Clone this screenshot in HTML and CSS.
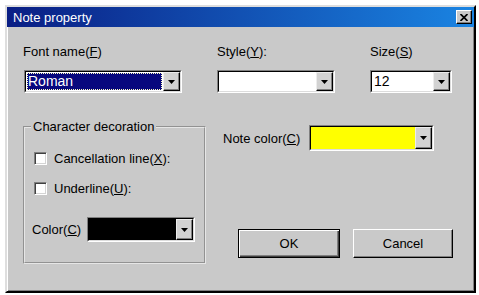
FILE: index.html
```html
<!DOCTYPE html>
<html lang="en">

<head>
  <meta charset="UTF-8">
  <title>Note property</title>
  <link rel="stylesheet" href="styles.css">
</head>

<body>
  <div class="window">
    <div class="titlebar">
      <span class="title">Note property</span>
      <span class="close-button">
        <svg width="8" height="7" viewBox="0 0 8 7"><path d="M0.5 0 L7.5 7 M7.5 0 L0.5 7" stroke="#000" stroke-width="1.7" fill="none"/></svg>
      </span>
    </div>

    <div class="content">
      <div class="top-row">
        <div class="field">
          <label class="label">Font name(<u>F</u>)</label>
          <div class="combo font-combo">
            <div class="combo-field">
              <span class="value selected">Roman</span>
              <span class="drop"><svg width="7" height="4" viewBox="0 0 7 4"><path d="M0 0H7L3.5 4Z" fill="#000"/></svg></span>
            </div>
          </div>
        </div>
        <div class="field">
          <label class="label">Style(<u>Y</u>):</label>
          <div class="combo style-combo">
            <div class="combo-field">
              <span class="value"></span>
              <span class="drop"><svg width="7" height="4" viewBox="0 0 7 4"><path d="M0 0H7L3.5 4Z" fill="#000"/></svg></span>
            </div>
          </div>
        </div>
        <div class="field">
          <label class="label">Size(<u>S</u>)</label>
          <div class="combo size-combo">
            <div class="combo-field">
              <span class="value">12</span>
              <span class="drop"><svg width="7" height="4" viewBox="0 0 7 4"><path d="M0 0H7L3.5 4Z" fill="#000"/></svg></span>
            </div>
          </div>
        </div>
      </div>

      <div class="lower">
        <fieldset class="decoration">
          <legend>Character decoration</legend>
          <div class="check-row first">
            <span class="checkbox"></span>
            <span>Cancellation line(<u>X</u>):</span>
          </div>
          <div class="check-row">
            <span class="checkbox"></span>
            <span>Underline(<u>U</u>):</span>
          </div>
          <div class="color-row">
            <span class="color-label">Color(<u>C</u>)</span>
            <div class="combo color-combo">
              <div class="combo-field">
                <span class="value black"></span>
                <span class="drop"><svg width="7" height="4" viewBox="0 0 7 4"><path d="M0 0H7L3.5 4Z" fill="#000"/></svg></span>
              </div>
            </div>
          </div>
        </fieldset>

        <div class="side">
          <div class="note-row">
            <span class="note-label">Note color(<u>C</u>)</span>
            <div class="combo note-combo">
              <div class="combo-field">
                <span class="value yellow"></span>
                <span class="drop"><svg width="7" height="4" viewBox="0 0 7 4"><path d="M0 0H7L3.5 4Z" fill="#000"/></svg></span>
              </div>
            </div>
          </div>
          <div class="buttons">
            <button class="push-button default">OK</button>
            <button class="push-button">Cancel</button>
          </div>
        </div>
      </div>
    </div>
  </div>
</body>

</html>
```

FILE: styles.css
```css
* {
  box-sizing: border-box;
}

body {
  margin: 0;
  background-color: #fff;
  font-family: "Liberation Sans", Arial, sans-serif;
  font-size: 13px;
  color: #000;
}

.window {
  margin: 5px 0 0 5px;
  width: 471px;
  height: 288px;
  background-color: #c9c9c9;
  border: 2px solid;
  border-color: #dedede #000 #000 #dedede;
  box-shadow: inset 1px 1px #fff, inset -1px -1px #808080;
}

.titlebar {
  height: 20px;
  display: flex;
  align-items: center;
  justify-content: space-between;
  padding: 0 2px 0 6px;
  background: linear-gradient(90deg, #0a1e84, #1a84e2);
  color: #fff;
}

.title {
  font-size: 13px;
}

.close-button {
  width: 16px;
  height: 14px;
  display: flex;
  align-items: center;
  justify-content: center;
  background-color: #c9c9c9;
  border: 1px solid;
  border-color: #fff #000 #000 #fff;
  box-shadow: inset -1px -1px #808080;
}

.content {
  padding: 17px 0 0 16px;
}

.top-row {
  display: grid;
  grid-template-columns: 194px 153px 82px;
}

.label {
  display: block;
  line-height: 15px;
  margin-bottom: 11px;
}

/* sunken combo box */
.combo {
  height: 23px;
  border: 1px solid;
  border-color: #808080 #fff #fff #808080;
}

.combo-field {
  display: flex;
  height: 100%;
  border: 1px solid;
  border-color: #000 #dcdcdc #dcdcdc #000;
  background-color: #fff;
}

.value {
  flex: 1;
  padding-left: 2px;
  font-size: 14px;
  line-height: 19px;
}

.value.selected {
  margin: 1px;
  padding-left: 1px;
  line-height: 17px;
  background-color: #08087e;
  color: #fff;
  outline: 1px dotted #ffffc0;
  outline-offset: -1px;
}

.value.black {
  background-color: #000;
}

.value.yellow {
  background-color: #ffff00;
}

.drop {
  width: 17px;
  display: flex;
  align-items: center;
  justify-content: center;
  background-color: #d2d2d2;
  border: 1px solid;
  border-color: #ececec #000 #000 #ececec;
  box-shadow: inset -1px -1px #808080;
}

.font-combo {
  margin-left: 1px;
  width: 158px;
}

.style-combo {
  width: 118px;
}

.size-combo {
  width: 82px;
}

.lower {
  display: flex;
  margin-top: 26px;
}

.decoration {
  margin: 0;
  width: 182px;
  height: 145px;
  padding: 0 9px;
  border: 2px groove #e6e6e6;
}

.decoration legend {
  padding: 0 2px;
  margin-left: -3px;
  line-height: 15px;
}

.check-row {
  display: flex;
  align-items: center;
  gap: 7px;
  height: 16px;
  margin-top: 14px;
}

.check-row.first {
  margin-top: 16px;
}

.checkbox {
  width: 13px;
  height: 13px;
  background-color: #fff;
  border: 1px solid;
  border-color: #808080 #fff #fff #808080;
  box-shadow: inset 1px 1px #404040, inset -1px -1px #d4d4d4;
}

.color-row {
  display: flex;
  align-items: center;
  margin: 21px 0 0 -2px;
}

.color-label {
  width: 55px;
}

.color-combo {
  width: 108px;
  height: 25px;
}

.side {
  margin-left: 17px;
}

.note-row {
  display: flex;
  align-items: center;
  margin-top: 6px;
}

.note-label {
  width: 86px;
}

.note-combo {
  width: 125px;
  height: 26px;
}

.buttons {
  display: flex;
  gap: 13px;
  margin: 78px 0 0 15px;
}

.push-button {
  width: 100px;
  height: 29px;
  padding: 0;
  font: inherit;
  color: #000;
  background-color: #c9c9c9;
  border: 1px solid;
  border-color: #fff #000 #000 #fff;
  box-shadow: inset -1px -1px #808080;
}

.push-button.default {
  width: 102px;
  border-color: #000;
  box-shadow: inset 1px 1px #fff, inset -1px -1px #404040, inset -2px -2px #808080;
}
```
